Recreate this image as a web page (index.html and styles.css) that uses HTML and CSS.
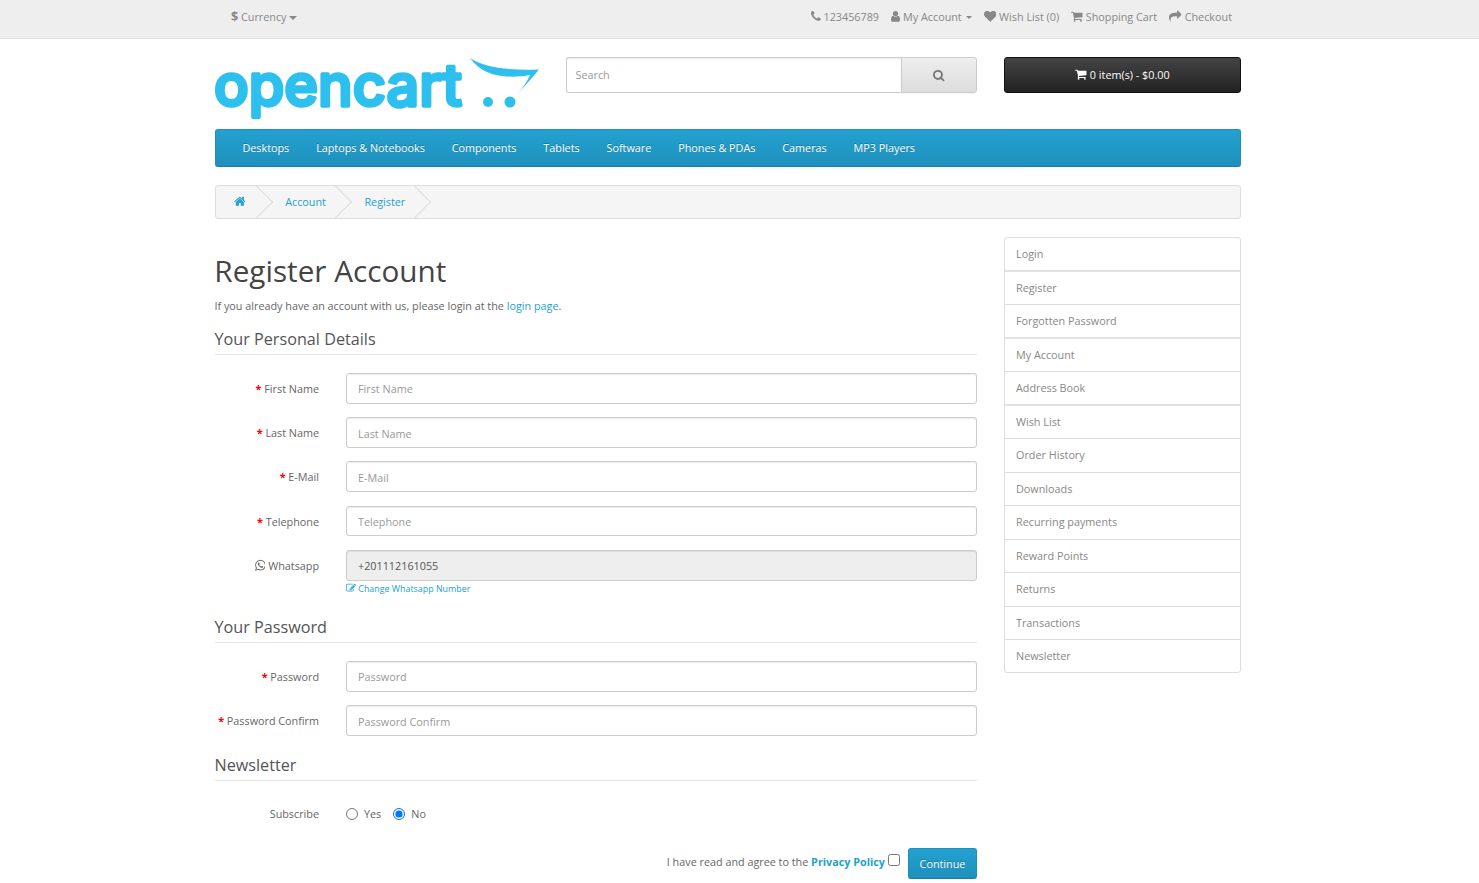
FILE: index.html
```html
<!DOCTYPE html>
<html lang="en">
<head>
<meta charset="utf-8">
<title>Register Account</title>
<link rel="stylesheet" href="styles.css">
</head>
<body>
<svg class="defs" width="0" height="0">
  <symbol id="i-home" viewBox="64 0 1664 1792"><path d="M1472 992v480q0 26-19 45t-45 19h-384v-384h-256v384h-384q-26 0-45-19t-19-45v-480q0-1 .5-3t.5-3l575-474 575 474q1 2 1 6zm223-69l-62 74q-8 9-21 11h-3q-13 0-21-7l-692-577-692 577q-12 8-24 7-13-2-21-11l-62-74q-8-10-7-23.500t11-21.500l719-599q32-26 76-26t76 26l244 204v-195q0-14 9-23t23-9h192q14 0 23 9t9 23v408l219 182q10 8 11 21.500t-7 23.500z"/></symbol>
  <symbol id="i-search" viewBox="64 0 1664 1792"><path d="M1216 832q0-185-131.500-316.500t-316.500-131.500-316.500 131.500-131.500 316.500 131.500 316.500 316.500 131.500 316.500-131.500 131.500-316.500zm512 832q0 52-38 90t-90 38q-54 0-90-38l-343-342q-179 124-399 124-143 0-273.500-55.500t-225-150-150-225-55.500-273.500 55.500-273.500 150-225 225-150 273.500-55.500 273.500 55.500 225 150 150 225 55.500 273.500q0 220-124 399l343 343q37 37 37 90z"/></symbol>
  <symbol id="i-phone" viewBox="192 0 1408 1792"><path d="M1600 1240q0 27-10 70.500t-21 68.500q-21 50-122 106-94 51-186 51-27 0-53-3.500t-57.500-12.500-47-14.500-55.500-20.500-49-18q-98-35-175-83-127-79-264-216t-216-264q-48-77-83-175-3-9-18-49t-20.500-55.500-14.500-47-12.500-57.500-3.500-53q0-92 51-186 56-101 106-122 25-11 68.500-21t70.500-10q14 0 21 3 18 6 53 76 11 19 30 54t35 63.500 31 53.500q3 4 17.500 25t21.500 35.500 7 28.500q0 20-28.500 50t-62 55-62 53-28.500 46q0 9 5 22.500t8.500 20.500 14 24 11.500 19q76 137 174 235t235 174q2 1 19 11.500t24 14 20.500 8.500 22.500 5q18 0 46-28.500t53-62 55-62 50-28.500q14 0 28.500 7t35.500 21.500 25 17.500q25 15 53.500 31t63.500 35 54 30q70 35 76 53 3 7 3 21z"/></symbol>
  <symbol id="i-user" viewBox="256 0 1280 1792"><path d="M1536 1399q0 109-62.500 187t-150.500 78h-854q-88 0-150.500-78t-62.500-187q0-85 8.500-160.500t31.500-152 58.500-131 94-89 134.500-34.500q131 128 313 128t313-128q76 0 134.500 34.500t94 89 58.500 131 31.500 152 8.500 160.500zm-256-887q0 159-112.500 271.500t-271.500 112.500-271.500-112.500-112.500-271.500 112.500-271.500 271.500-112.500 271.500 112.500 112.500 271.500z"/></symbol>
  <symbol id="i-heart" viewBox="0 0 1792 1792"><path d="M896 1664q-26 0-44-18l-624-602q-10-8-27.500-26t-55.500-65.500-68-97.500-53.500-121-23.500-138q0-220 127-344t351-124q62 0 126.500 21.500t120 58 95.500 68.500 76 68q36-36 76-68t95.500-68.500 120-58 126.500-21.500q224 0 351 124t127 344q0 221-229 450l-623 600q-18 18-44 18z"/></symbol>
  <symbol id="i-cart" viewBox="64 0 1664 1792"><path d="M704 1536q0 52-38 90t-90 38-90-38-38-90 38-90 90-38 90 38 38 90zm896 0q0 52-38 90t-90 38-90-38-38-90 38-90 90-38 90 38 38 90zm128-1088v512q0 24-16.500 42.500t-40.500 21.500l-1044 122q13 60 13 70 0 16-24 64h920q26 0 45 19t19 45-19 45-45 19h-1024q-26 0-45-19t-19-45q0-11 8-31.500t16-36 21.500-40 15.500-29.500l-177-823h-204q-26 0-45-19t-19-45 19-45 45-19h256q16 0 28.500 6.500t19.500 15.500 13 24.500 8 26 5.500 29.500 4.500 26h1201q26 0 45 19t19 45z"/></symbol>
  <symbol id="i-share" viewBox="0 0 1792 1792"><path d="M1792 640q0 26-19 45l-512 512q-19 19-45 19t-45-19-19-45v-256h-224q-98 0-175.500 6t-154 21.500-133 42.500-105.500 69.500-80 101-48.500 138.500-17.500 181q0 55 5 123 0 6 2.500 23.500t2.500 26.500q0 15-8.500 25t-23.500 10q-16 0-28-17-7-9-13-22t-13.500-30-10.500-24q-127-285-127-451 0-199 53-333 162-403 875-403h224v-256q0-26 19-45t45-19 45 19l512 512q19 19 19 45z"/></symbol>
  <symbol id="i-edit" viewBox="0 0 1792 1792"><path d="M888 1184l116-116-152-152-116 116v56h96v96h56zm440-720q-16-16-33 1l-350 350q-17 17-1 33t33-1l350-350q17-17 1-33zm80 594v190q0 119-84.500 203.500t-203.500 84.500h-832q-119 0-203.500-84.500t-84.500-203.500v-832q0-119 84.500-203.500t203.500-84.500h832q63 0 117 25 15 7 18 23 3 17-9 29l-49 49q-14 14-32 8-23-6-45-6h-832q-66 0-113 47t-47 113v832q0 66 47 113t113 47h832q66 0 113-47t47-113v-126q0-13 9-22l64-64q15-15 35-7t20 29zm-96-738l288 288-672 672h-288v-288zm444 132l-92 92-288-288 92-92q28-28 68-28t68 28l152 152q28 28 28 68t-28 68z"/></symbol>
  <symbol id="i-whatsapp" viewBox="128 0 1536 1792"><path d="M1113 974q13 0 97.500 44t89.500 53q2 5 2 15 0 33-17 76-16 39-71 65.500t-102 26.500q-57 0-190-62-98-45-170-118t-148-185q-72-107-71-194v-8q3-91 74-158 24-22 52-22 6 0 18 1.500t19 1.500q19 0 26.500 6.500t15.500 27.500q8 20 33 88t25 75q0 21-34.500 57.500t-34.500 46.500q0 7 5 15 34 73 102 137 56 53 151 101 12 7 22 7 15 0 54-48.500t52-48.500zm-203 530q127 0 243.500-50t200.500-134 134-200.500 50-243.500-50-243.500-134-200.500-200.500-134-243.500-50-243.500 50-200.500 134-134 200.500-50 243.500q0 203 120 368l-79 233 242-77q158 104 345 104zm0-1382q153 0 292.500 60t240.500 161 161 240.500 60 292.500-60 292.500-161 240.500-240.500 161-292.500 60q-195 0-365-94l-417 134 136-405q-108-178-108-389 0-153 60-292.500t161-240.500 240.500-161 292.500-60z"/></symbol>
</svg>

<nav class="topbar">
  <div class="container topbar-inner">
    <div class="currency"><b class="dollar">$</b> Currency <span class="caret caret-big"></span></div>
    <ul class="toplinks">
      <li><svg class="ico w-phone"><use href="#i-phone"/></svg> 123456789</li>
      <li><svg class="ico w-user"><use href="#i-user"/></svg> My Account <span class="caret"></span></li>
      <li><svg class="ico w-wide"><use href="#i-heart"/></svg> Wish List (0)</li>
      <li><svg class="ico w-mid"><use href="#i-cart"/></svg> Shopping Cart</li>
      <li><svg class="ico w-wide"><use href="#i-share"/></svg> Checkout</li>
    </ul>
  </div>
</nav>

<header class="container header">
  <a class="logo" href="#">
    <svg width="326" height="63" viewBox="0 0 326 63">
      <text class="logo-text" x="-1" y="48" textLength="248" lengthAdjust="spacingAndGlyphs">opencart</text>
      <path class="logo-mark" d="M255 0C270 10 295 12.500 324 11.500C317 20 310 28 303 35C308 29 312 24 315 17C293 21 268 19 255 0Z"/>
      <circle class="logo-mark" cx="273" cy="44" r="5"/>
      <circle class="logo-mark" cx="295" cy="44" r="5.500"/>
    </svg>
  </a>
  <div class="search">
    <input class="search-input" type="text" placeholder="Search">
    <button class="search-btn" type="button"><svg class="ico w-mid"><use href="#i-search"/></svg></button>
  </div>
  <button class="cart-btn" type="button"><svg class="ico w-mid"><use href="#i-cart"/></svg> 0 item(s) - $0.00</button>
</header>

<div class="container">
  <nav class="menu">
    <a href="#">Desktops</a>
    <a href="#">Laptops &amp; Notebooks</a>
    <a href="#">Components</a>
    <a href="#">Tablets</a>
    <a href="#">Software</a>
    <a href="#">Phones &amp; PDAs</a>
    <a href="#">Cameras</a>
    <a href="#">MP3 Players</a>
  </nav>

  <ul class="breadcrumb">
    <li><a href="#"><svg class="ico w-mid"><use href="#i-home"/></svg></a></li>
    <li><a href="#">Account</a></li>
    <li><a href="#">Register</a></li>
  </ul>

  <div class="columns">
    <main class="content">
      <h1>Register Account</h1>
      <p class="intro">If you already have an account with us, please login at the <a href="#">login page</a>.</p>

      <h2 class="legend">Your Personal Details</h2>
      <div class="fields">
        <div class="row"><label class="req">First Name</label><input type="text" placeholder="First Name"></div>
        <div class="row"><label class="req">Last Name</label><input type="text" placeholder="Last Name"></div>
        <div class="row"><label class="req">E-Mail</label><input type="text" placeholder="E-Mail"></div>
        <div class="row"><label class="req">Telephone</label><input type="text" placeholder="Telephone"></div>
        <div class="row">
          <label><svg class="ico w-wa"><use href="#i-whatsapp"/></svg> Whatsapp</label>
          <input type="text" value="+201112161055" disabled>
          <a class="change" href="#"><svg class="ico-edit"><use href="#i-edit"/></svg> Change Whatsapp Number</a>
        </div>
      </div>

      <h2 class="legend legend-password">Your Password</h2>
      <div class="fields fields-password">
        <div class="row"><label class="req">Password</label><input type="password" placeholder="Password"></div>
        <div class="row"><label class="req">Password Confirm</label><input type="password" placeholder="Password Confirm"></div>
      </div>

      <h2 class="legend legend-news">Newsletter</h2>
      <div class="row row-radio">
        <label>Subscribe</label>
        <div class="radios">
          <span class="radio"><input type="radio" name="nl"> Yes</span>
          <span class="radio"><input type="radio" name="nl" checked> No</span>
        </div>
      </div>

      <div class="agree">
        <span>I have read and agree to the <a href="#"><b>Privacy Policy</b></a></span>
        <input class="check" type="checkbox">
        <button class="continue" type="button">Continue</button>
      </div>
    </main>

    <aside class="sidebar">
      <a href="#">Login</a>
      <a href="#">Register</a>
      <a href="#">Forgotten Password</a>
      <a href="#">My Account</a>
      <a href="#">Address Book</a>
      <a href="#">Wish List</a>
      <a href="#">Order History</a>
      <a href="#">Downloads</a>
      <a href="#">Recurring payments</a>
      <a href="#">Reward Points</a>
      <a href="#">Returns</a>
      <a href="#">Transactions</a>
      <a href="#">Newsletter</a>
    </aside>
  </div>
</div>
</body>
</html>
```
FILE: styles.css
```css
* { box-sizing: border-box; }
html, body { margin: 0; padding: 0; }
body {
  font-family: "Open Sans", "Liberation Sans", sans-serif;
  font-size: 10.800px;
  line-height: 20px;
  color: #666;
  background: #fff;
  overflow: hidden;
  height: 883px;
}
a { color: #23a1d1; text-decoration: none; }
.defs { position: absolute; }
.container { width: 1026px; margin-left: 215px; }
.ico { height: 12.600px; fill: currentColor; vertical-align: -2px; }
.w-phone { width: 9.900px; }
.w-user { width: 9px; }
.w-wide { width: 12.600px; }
.w-mid { width: 11.700px; }
.w-wa { width: 10.800px; }

/* Top bar */
.topbar { height: 39px; background: #eee; border-bottom: 1px solid #e2e2e2; }
.topbar-inner { display: flex; justify-content: space-between; color: #888; }
.currency { padding: 7px 0 0 16px; line-height: 20px; }
.dollar { font-size: 12.600px; font-weight: 700; }
.caret {
  display: inline-block;
  width: 0;
  height: 0;
  margin-left: 1px;
  vertical-align: 2px;
  border-top: 3px solid #888;
  border-left: 3px solid transparent;
  border-right: 3px solid transparent;
}
.caret-big { margin-left: 0; border-width: 4px 4px 0; vertical-align: 1px; }
.toplinks { display: flex; gap: 12.200px; list-style: none; margin: 0; padding: 7px 9px 0 0; }
.toplinks li { white-space: nowrap; }

/* Header */
.header { display: grid; grid-template-columns: 325px 1fr 237px; column-gap: 26px; height: 90px; padding-top: 18px; }
.logo { display: block; height: 63px; margin-top: 1px; }
.logo svg { display: block; overflow: visible; }
.logo-text {
  font-family: "Inter", sans-serif;
  font-size: 58px;
  font-weight: 500;
  fill: #2dc0ef;
  stroke: #2dc0ef;
  stroke-width: 3.500;
  stroke-linejoin: round;
}
.logo-mark { fill: #2dc0ef; }
.search { display: flex; height: 36px; }
.search-input {
  width: 335px;
  height: 36px;
  padding: 0 8.500px 2px;
  font: 10.800px "Open Sans", sans-serif;
  color: #555;
  border: 1px solid #ccc;
  border-right: 0;
  border-radius: 3px 0 0 3px;
  outline: 0;
  box-shadow: inset 0 1px 1px rgba(0,0,0,.075);
}
.search-input::placeholder, .row input::placeholder { color: #999; opacity: 1; }
.search-btn {
  width: 76px;
  height: 36px;
  padding: 0;
  color: #777;
  border: 1px solid #ccc;
  border-radius: 0 3px 3px 0;
  background: linear-gradient(to bottom, #eee, #ddd);
  box-shadow: inset 0 1px 0 rgba(255,255,255,.2), 0 1px 2px rgba(0,0,0,.05);
}
.cart-btn {
  height: 36px;
  padding: 0 0 2px;
  font: 10.800px "Open Sans", sans-serif;
  color: #fff;
  border: 1px solid #111;
  border-radius: 3px;
  background: linear-gradient(to bottom, #444, #222);
  text-shadow: 0 -1px 0 rgba(0,0,0,.25);
}

/* Menu */
.menu {
  display: flex;
  height: 38px;
  padding-left: 13px;
  background: linear-gradient(to bottom, #23a1d1, #1f90bb);
  border: 1px solid #1f90bb;
  border-bottom-color: #1b7da3;
  border-radius: 3px;
}
.menu a {
  padding: 0 13.450px;
  line-height: 36px;
  color: #fff;
  text-shadow: 0 -1px 0 rgba(0,0,0,.25);
}

/* Breadcrumb */
.breadcrumb {
  display: flex;
  height: 34px;
  margin: 18px 0 0;
  padding: 0;
  list-style: none;
  overflow: hidden;
  background: #f5f5f5;
  border: 1px solid #ddd;
  border-radius: 3px;
}
.breadcrumb li { position: relative; padding: 0 26px 0 12.500px; line-height: 32px; }
.breadcrumb li:first-child { padding: 0 27px 0 18px; }
.breadcrumb li::after {
  content: "";
  position: absolute;
  top: 4.350px;
  right: 4.850px;
  width: 23.300px;
  height: 23.300px;
  transform: rotate(45deg);
  border-top: 1px solid #ddd;
  border-right: 1px solid #ddd;
}

/* Columns */
.columns { display: grid; grid-template-columns: 762px 237px; column-gap: 27px; margin-top: 18px; }
h1 { margin: 17px 0 0; font-size: 29.700px; font-weight: 400; line-height: 33px; color: #444; text-indent: -.7px; }
.intro { margin: 10px 0 0; line-height: 17px; text-indent: -.5px; }
.legend {
  height: 30px;
  margin: 11px 0 0;
  font-size: 16.200px;
  font-weight: 400;
  line-height: 28px;
  color: #555;
  border-bottom: 1px solid #e5e5e5;
  text-indent: -.5px;
}
.legend-password { margin-top: 17px; }
.legend-news { margin-top: 15px; }
.fields { display: flex; flex-direction: column; gap: 13.650px; margin-top: 18px; }
.fields-password { margin-top: 18.500px; }
.row { display: grid; grid-template-columns: 104px 1fr; column-gap: 27px; }
.row label { height: 30.600px; line-height: 31px; text-align: right; white-space: nowrap; }
.req::before { content: "* "; font-weight: 700; color: #f00; }
.row input[type="text"], .row input[type="password"] {
  width: 100%;
  height: 30.600px;
  padding: 1px 11px 0;
  font: 10.800px "Open Sans", sans-serif;
  color: #555;
  background: #fff;
  border: 1px solid #ccc;
  border-radius: 3px;
  outline: 0;
  box-shadow: inset 0 1px 1px rgba(0,0,0,.075);
}
.row input[disabled] { background: #eee; }
.change { grid-column: 2; height: 14px; margin-top: 1px; font-size: 8.900px; line-height: 14px; }
.ico-edit { width: 10px; height: 10px; fill: currentColor; vertical-align: -1px; }
.row-radio { margin-top: 18px; }
.row-radio label { line-height: 30px; }
.radios { display: flex; gap: 12px; height: 30px; align-items: center; }
.radio { display: inline-flex; align-items: center; gap: 6px; }
.radio input { width: 12px; height: 12px; margin: 1px 0 0; }
.agree { display: flex; justify-content: flex-end; align-items: flex-start; margin-top: 19px; }
.agree span { padding-top: 4px; }
.check { width: 12px; height: 12px; margin: 6px 8px 0 3px; }
.continue {
  width: 69px;
  height: 31px;
  padding: 0;
  font: 10.800px "Open Sans", sans-serif;
  color: #fff;
  background: linear-gradient(to bottom, #23a1d1, #1f90bb);
  border: 1px solid #1f90bb;
  border-bottom-color: #1b7da3;
  border-radius: 3px;
  text-shadow: 0 -1px 0 rgba(0,0,0,.25);
}

/* Sidebar */
.sidebar { align-self: start; background: #fff; border: 1px solid #ddd; border-radius: 3px; height: 436px; }
.sidebar a {
  display: block;
  height: 33.500px;
  padding: 6.250px 11px 0;
  line-height: 20px;
  color: #888;
  border-bottom: 1px solid #ddd;
}
.sidebar a:nth-child(-n+5):nth-child(odd) { border-bottom: 2px solid #e2e2e2; }
.sidebar a:last-child { border-bottom: 0; }
```
